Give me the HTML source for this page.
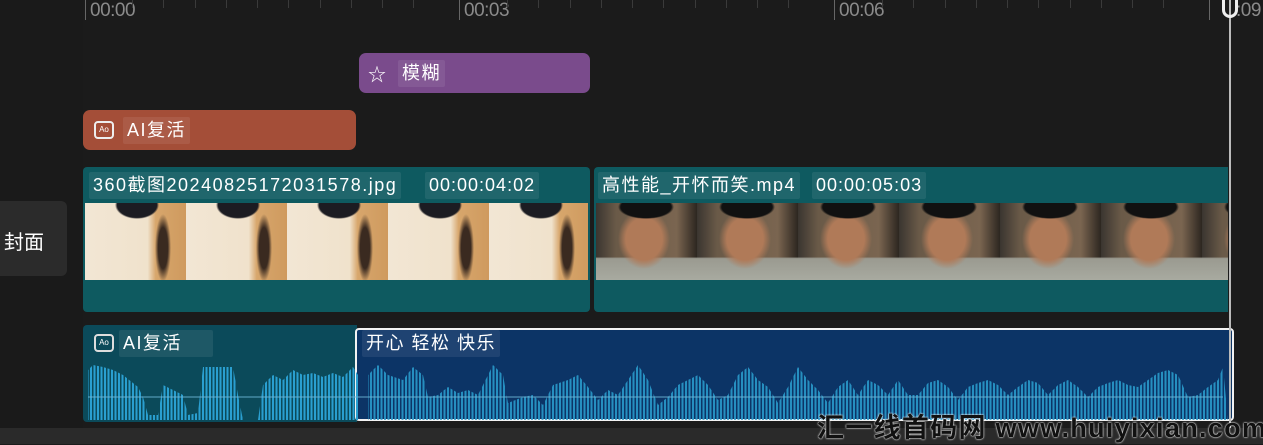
<!DOCTYPE html>
<html><head><meta charset="utf-8"><style>
*{margin:0;padding:0;box-sizing:border-box}
body{width:1263px;height:444px;background:#1b1b1b;overflow:hidden;position:relative;font-family:"Liberation Sans","Noto Sans CJK SC",sans-serif;color:#fff}
.a{position:absolute}
.tick{position:absolute;top:0;width:1px;background:#555}
.tl{position:absolute;top:0;font-size:19px;color:#8a8a8a;letter-spacing:-0.5px}
.lab{position:absolute;font-size:18px;letter-spacing:1.5px;background:rgba(255,255,255,0.08);padding:0 4px;height:27px;line-height:27px;border-radius:2px;white-space:nowrap}
.t1{background:
 radial-gradient(ellipse 22px 14px at 52px 2px,#1c1c22 90%,transparent 100%),
 radial-gradient(ellipse 8px 34px at 78px 45px,#3a2a20 60%,transparent 100%),
 linear-gradient(90deg,#f2e6d4 0,#f0e2cc 62%,#d7a66c 70%,#cf9a5e 100%);
 background-size:101px 77px;background-repeat:repeat-x}
.t2{background:
 radial-gradient(ellipse 28px 12px at 50px 4px,#111 90%,transparent 100%),
 radial-gradient(ellipse 26px 30px at 48px 36px,#b07a58 70%,transparent 100%),
 linear-gradient(180deg,transparent 0,transparent 70%,#9a9a90 72%,#a8aaa0 100%),
 linear-gradient(90deg,#3a3530 0,#6a5a48 20%,#7a6550 80%,#2c2620 100%);
 background-size:101px 77px;background-repeat:repeat-x}
</style></head><body>
<div class="a" style="left:0;top:0;width:83px;height:444px;background:#1a1a1a"></div>
<div class="tick" style="left:85px;height:20px;background:#666"></div>
<div class="tl" style="left:90px">00:00</div>
<div class="tick" style="left:459px;height:20px;background:#666"></div>
<div class="tl" style="left:464px">00:03</div>
<div class="tick" style="left:834px;height:20px;background:#666"></div>
<div class="tl" style="left:839px">00:06</div>
<div class="tick" style="left:1209px;height:20px;background:#666"></div>
<div class="tl" style="left:1236px">:09</div>
<div class="a" style="left:132px;top:0;width:1px;height:8px;background:#3a3a3a;box-shadow:31px 0 #3a3a3a,63px 0 #3a3a3a,94px 0 #3a3a3a,125px 0 #3a3a3a,156px 0 #3a3a3a,188px 0 #3a3a3a,219px 0 #3a3a3a,250px 0 #3a3a3a,281px 0 #3a3a3a,375px 0 #3a3a3a,406px 0 #3a3a3a,438px 0 #3a3a3a,469px 0 #3a3a3a,500px 0 #3a3a3a,531px 0 #3a3a3a,563px 0 #3a3a3a,594px 0 #3a3a3a,625px 0 #3a3a3a,656px 0 #3a3a3a,750px 0 #3a3a3a,781px 0 #3a3a3a,813px 0 #3a3a3a,844px 0 #3a3a3a,875px 0 #3a3a3a,906px 0 #3a3a3a,938px 0 #3a3a3a,969px 0 #3a3a3a,1000px 0 #3a3a3a,1031px 0 #3a3a3a"></div>
<div class="a" style="left:359px;top:53px;width:231px;height:40px;background:#7a4b8c;border-radius:7px"></div>
<div class="a" style="left:368px;top:61px;font-size:18px">☆</div>
<div class="lab" style="left:398px;top:60px">模糊</div>
<div class="a" style="left:83px;top:110px;width:273px;height:40px;background:#a44e38;border-radius:7px"></div>
<div class="a" style="left:94px;top:121px;width:20px;height:18px;border:2px solid #eee;border-radius:4px;font-size:8px;line-height:14px;text-align:center">Ao</div>
<div class="lab" style="left:123px;top:117px">AI复活</div>
<div class="a" style="left:0;top:201px;width:67px;height:75px;background:#2b2b2b;border-radius:0 6px 6px 0"></div>
<div class="a" style="left:4px;top:226px;font-size:20px">封面</div>
<div class="a" style="left:83px;top:167px;width:507px;height:145px;background:#0e5a60;border-radius:4px"></div>
<div class="lab" style="left:89px;top:172px">360截图20240825172031578.jpg</div>
<div class="lab" style="left:425px;top:172px;letter-spacing:1px">00:00:04:02</div>
<div class="a t1" style="left:85px;top:203px;width:503px;height:77px"></div>
<div class="a" style="left:594px;top:167px;width:634px;height:145px;background:#0e5a60;border-radius:4px 0 0 4px"></div>
<div class="lab" style="left:598px;top:172px">高性能_开怀而笑.mp4</div>
<div class="lab" style="left:812px;top:172px;letter-spacing:1px">00:00:05:03</div>
<div class="a t2" style="left:596px;top:203px;width:632px;height:77px"></div>
<div class="a" style="left:83px;top:325px;width:274px;height:97px;background:#0b4a5a;border-radius:4px 0 0 4px"></div>
<div class="a" style="left:355px;top:328px;width:879px;height:93px;background:#0c3466;border:2px solid #f2f2f2;border-radius:4px"></div>
<svg class="a" style="left:83px;top:325px" width="1151" height="97">
<defs><pattern id="st" width="3.5" height="10" patternUnits="userSpaceOnUse"><rect width="2" height="10" fill="#2a9fd0"/></pattern></defs>
<polygon fill="url(#st)" points="5,95 5,45 10,40 20,42 30,45 40,50 55,62 60,72 65,90 75,90 80,60 90,65 100,70 105,90 115,88 120,42 130,42 150,42 155,70 160,95 175,95 180,60 190,50 200,55 210,45 220,50 230,48 240,52 250,48 260,52 270,42 275,50 275,95"/>
<polygon fill="url(#st)" opacity="0.85" points="285,95 285,50 295,40 305,50 320,55 330,42 340,50 345,72 355,70 365,62 375,68 385,65 395,70 405,50 410,40 420,50 425,78 440,72 450,70 460,80 470,60 485,55 495,50 505,62 515,75 525,65 535,70 545,55 555,40 565,55 575,80 585,72 595,60 605,55 615,50 625,60 635,75 645,70 655,50 665,42 675,55 685,62 695,78 705,62 715,42 725,55 735,65 745,78 755,62 765,55 775,70 785,55 795,60 805,70 815,55 825,70 835,70 845,58 855,55 865,62 875,75 885,62 895,58 905,55 915,60 925,70 935,62 945,55 955,58 965,70 975,60 985,55 995,62 1005,72 1015,62 1025,58 1035,55 1045,60 1055,62 1065,55 1075,48 1085,45 1095,50 1105,72 1115,70 1125,62 1135,55 1140,42 1145,95"/>
<line x1="5" y1="72" x2="1140" y2="72" stroke="#6fb7d8" stroke-width="1.2" opacity="0.7"/>
</svg>
<div class="a" style="left:94px;top:334px;width:20px;height:18px;border:2px solid #ddd;border-radius:4px;font-size:8px;line-height:14px;text-align:center">Ao</div>
<div class="lab" style="left:119px;top:330px;width:94px">AI复活</div>
<div class="lab" style="left:362px;top:330px">开心 轻松 快乐</div>
<div class="a" style="left:1229px;top:0;width:2px;height:444px;background:#bbb"></div>
<div class="a" style="left:1222px;top:-6px;width:16px;height:24px;border:3px solid #eee;border-radius:0 0 8px 8px"></div>
<div class="a" style="left:0;top:428px;width:1263px;height:16px;background:#2a2a2a"></div>
<div class="a" style="left:817px;top:406px;font-size:27px;font-weight:bold;color:#111;letter-spacing:1.3px;white-space:nowrap;text-shadow:0 0 2px #fff,0 0 1px #fff">汇一线首码网 www.huiyixian.com</div>
</body></html>
